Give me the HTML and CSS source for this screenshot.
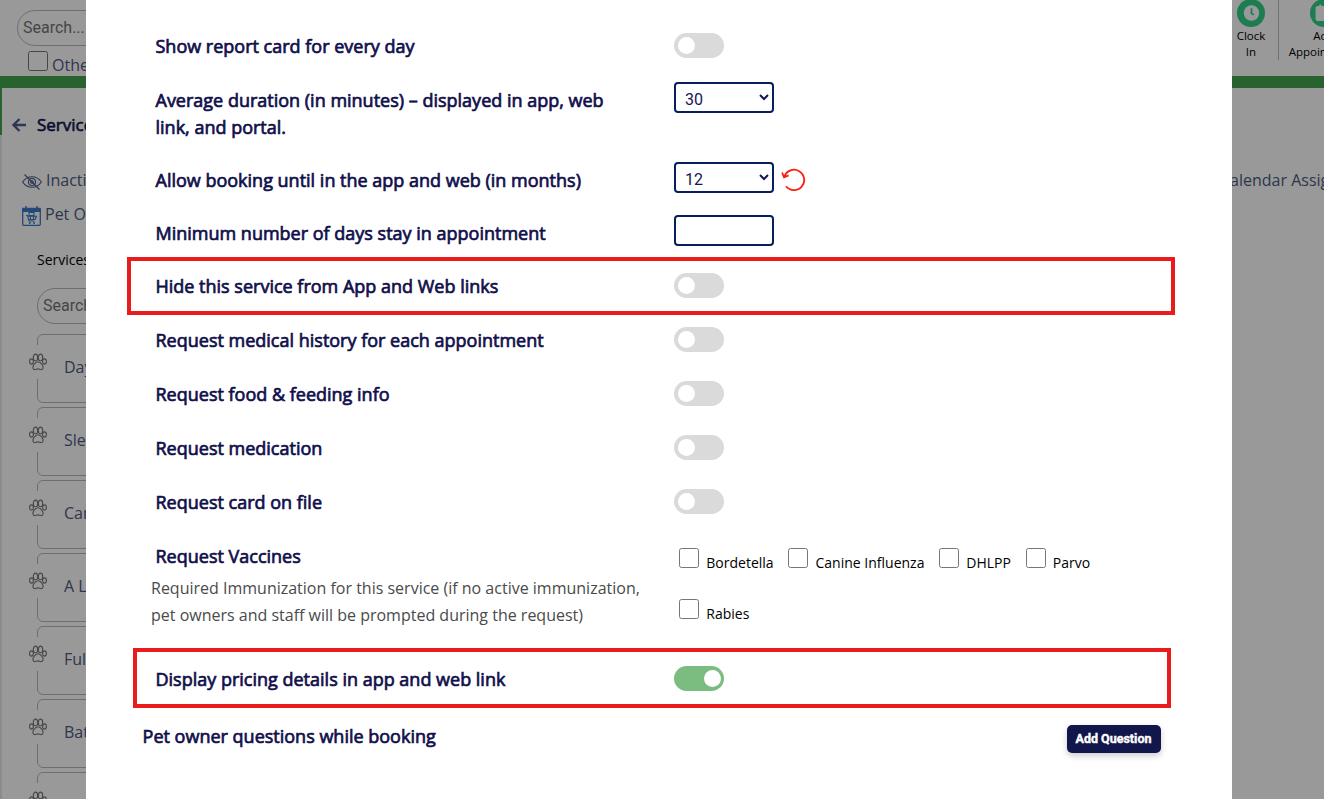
FILE: index.html
```
<!DOCTYPE html>
<html lang="en">
<head>
    <meta charset="UTF-8">
    <title>Service Settings</title>
    <link rel="stylesheet" href="styles.css">
</head>

<body>
<svg class="defs">
    <symbol id="paw" viewBox="0 0 18 34">
        <g transform="translate(0 8.500)">
            <ellipse cx="6.500" cy="3.900" rx="2.200" ry="3.300"/>
            <ellipse cx="11.500" cy="3.900" rx="2.200" ry="3.300"/>
            <ellipse cx="2.500" cy="8" rx="1.900" ry="2.600"/>
            <ellipse cx="15.500" cy="8" rx="1.900" ry="2.600"/>
            <path d="M9 8.200c2.600 0 3.400 1.900 4.400 3.400 1.300 2 .7 4.600-1.200 4.600-1.200 0-1.900-.8-3.200-.8s-2 .8-3.200.8c-1.900 0-2.500-2.600-1.200-4.600 1-1.500 1.800-3.400 4.400-3.400z"/>
        </g>
    </symbol>
</svg>

<div id="page">
    <div id="header">
        <div class="header-search">
            <div class="search">Search...</div>
            <label class="other"><input type="checkbox"> Other</label>
        </div>
        <div class="actions">
            <div class="action">
                <svg width="30" height="30" viewBox="0 0 30 30">
                    <circle cx="15" cy="15" r="15" fill="#2fd085"/>
                    <circle cx="15.500" cy="15" r="8.300" fill="#fff"/>
                    <path d="M15.500 10v5.500l2.500 1.300" fill="none" stroke="#2fd085" stroke-width="1.800"/>
                </svg>
                <span>Clock<br>In</span>
            </div>
            <div class="action">
                <svg width="30" height="30" viewBox="0 0 30 30">
                    <circle cx="15" cy="15" r="15" fill="#2fd085"/>
                    <path d="M8 7.500h2V6h2v1.500h6V6h2v1.500h2a2 2 0 0 1 2 2v12a2 2 0 0 1-2 2H8a2 2 0 0 1-2-2v-12a2 2 0 0 1 2-2z" fill="#fff"/>
                </svg>
                <span>Add<br>Appointment</span>
            </div>
        </div>
    </div>

    <div id="content">
        <div id="sidebar">
            <div class="back">
                <svg width="14" height="14" viewBox="0 0 14 14">
                    <path d="M14 7H2M7.500 1L1.500 7l6 6" fill="none" stroke="#4e5b86" stroke-width="2.300"/>
                </svg>
                <span>Services</span>
            </div>
            <div class="side-link inactive">
                <svg width="20" height="16" viewBox="0 0 20 16">
                    <g fill="none" stroke="#4e5b86" stroke-width="1.100">
                        <path d="M.6 8C3 4.500 6 2.700 10 2.700S17 4.500 19.400 8C17 11.500 14 13.300 10 13.300S3 11.500.6 8z"/>
                        <circle cx="10" cy="8" r="3.500"/>
                        <circle cx="10" cy="8" r="1.300"/>
                        <path d="M2.500.5l15 15"/>
                    </g>
                </svg>
                <span>Inactive</span>
            </div>
            <div class="side-link pet-owner">
                <svg width="19" height="20" viewBox="0 0 19 20">
                    <rect x=".7" y="2.700" width="17.600" height="16.600" rx="1" fill="none" stroke="#3d78c8" stroke-width="1.300"/>
                    <path d="M1 2.500h17v2.700H1zM4 0v3M15 0v3" fill="#3d78c8" stroke="#3d78c8" stroke-width="1.400"/>
                    <path d="M7 6.500h5v3H7zM4 9.500h1.500l1.500 5.500h5.500M5.500 10.300h9l-1.300 3.200H6.500M8.500 10v3.500M11.500 10v3.500" fill="none" stroke="#3d78c8" stroke-width="1.100"/>
                    <circle cx="7.800" cy="17" r="1" fill="#3d78c8"/>
                    <circle cx="12" cy="17" r="1" fill="#3d78c8"/>
                </svg>
                <span>Pet Owner</span>
            </div>
            <div class="side-title">Services</div>
            <div class="search side-search">Search...</div>
            <div class="services">
                <div class="service"><svg class="paw"><use href="#paw"/></svg>Daycare</div>
                <div class="service"><svg class="paw"><use href="#paw"/></svg>Sleepover</div>
                <div class="service"><svg class="paw"><use href="#paw"/></svg>Canine</div>
                <div class="service"><svg class="paw"><use href="#paw"/></svg>A La Carte</div>
                <div class="service"><svg class="paw"><use href="#paw"/></svg>Full Groom</div>
                <div class="service"><svg class="paw"><use href="#paw"/></svg>Bath</div>
                <div class="service"><svg class="paw"><use href="#paw"/></svg></div>
            </div>
        </div>
        <div class="tab">Calendar Assignment</div>
    </div>
</div>

<div id="backdrop">
    <div id="modal">
        <div class="row">
            <div class="name">Show report card for every day</div>
            <div class="toggle"></div>
        </div>
        <div class="row duration">
            <div class="name">Average duration (in minutes) – displayed in app, web link, and portal.</div>
            <div class="field"><select><option>30</option></select></div>
        </div>
        <div class="row short">
            <div class="name">Allow booking until in the app and web (in months)</div>
            <div class="field">
                <select><option>12</option></select>
                <svg class="reset" width="25" height="24" viewBox="0 0 25 24">
                    <path d="M3.400 8.500A10.200 10.200 0 1 1 5 18.300M1.100 4.500l1.900 4.800L7.600 7.300" fill="none" stroke="#fb1d0e" stroke-width="1.800"/>
                </svg>
            </div>
        </div>
        <div class="row short">
            <div class="name">Minimum number of days stay in appointment</div>
            <div class="field"><input type="text"></div>
        </div>
        <div class="row">
            <div class="name">Hide this service from App and Web links</div>
            <div class="toggle"></div>
            <div class="mark mark-hide"></div>
        </div>
        <div class="row">
            <div class="name">Request medical history for each appointment</div>
            <div class="toggle"></div>
        </div>
        <div class="row">
            <div class="name">Request food &amp; feeding info</div>
            <div class="toggle"></div>
        </div>
        <div class="row">
            <div class="name">Request medication</div>
            <div class="toggle"></div>
        </div>
        <div class="row">
            <div class="name">Request card on file</div>
            <div class="toggle"></div>
        </div>
        <div class="row vaccines">
            <div>
                <div class="name">Request Vaccines</div>
                <div class="hint">Required Immunization for this service (if no active immunization, pet owners and staff will be prompted during the request)</div>
            </div>
            <div class="checks">
                <label><input type="checkbox"><span>Bordetella</span></label>
                <label><input type="checkbox"><span>Canine Influenza</span></label>
                <label><input type="checkbox"><span>DHLPP</span></label>
                <label><input type="checkbox"><span>Parvo</span></label>
                <label><input type="checkbox"><span>Rabies</span></label>
            </div>
        </div>
        <div class="row">
            <div class="name">Display pricing details in app and web link</div>
            <div class="toggle on"></div>
            <div class="mark mark-pricing"></div>
        </div>
        <div class="questions">
            <div class="name">Pet owner questions while booking</div>
            <button type="button">Add Question</button>
        </div>
    </div>
</div>
</body>
</html>
```
FILE: styles.css
```
* {
    box-sizing: border-box;
}

body {
    margin: 0;
    height: 799px;
    overflow: hidden;
    color: #000;
    font-family: "Open Sans", Arial, sans-serif;
    font-size: 16px;
}

.defs {
    display: none;
}

#page {
    height: 799px;
    overflow: hidden;
}

#header {
    display: flex;
    justify-content: space-between;
    height: 88px;
    border-bottom: 12px solid #43a34d;
}

.header-search {
    padding: 10px 0 0 17px;
}

.search {
    width: 220px;
    height: 36px;
    padding: 0 5px;
    border: 1px solid #b4b7c0;
    border-radius: 18px;
    color: #757575;
    font-family: Roboto, Arial, sans-serif;
    line-height: 33px;
}

.other {
    display: flex;
    gap: 4px;
    padding: 5px 0 0 11px;
    color: #4e5b7f;
    line-height: 28px;
}

input[type="checkbox"] {
    flex: none;
    width: 20px;
    height: 20px;
    margin: 0;
    border: 1px solid #767676;
    border-radius: 2.5px;
    background: #fff;
    appearance: none;
}

.actions {
    display: flex;
    height: 60px;
    margin-right: -45px;
}

.action {
    display: flex;
    flex-direction: column;
    align-items: center;
    width: 90px;
    margin-top: -1px;
    font-size: 11.5px;
    line-height: 16px;
    text-align: center;
}

.action span {
    margin-top: 1px;
}

.action:first-child {
    width: 56px;
    border-right: 1px solid #bbb;
}

.action:first-child span {
    margin-left: 1px;
}

.action:last-child svg {
    margin-left: -1px;
}

#content {
    display: flex;
}

#sidebar {
    flex: none;
    width: 1220px;
    height: 711px;
    border-left: 2px solid;
    border-image: linear-gradient(#43a34d 48px, #e6e6f0 48px) 1;
    border-width: 0 0 0 2px;
}

.back {
    display: flex;
    align-items: center;
    gap: 11px;
    height: 24px;
    margin: 25px 0 0 10px;
    color: #14174f;
    font-size: 17px;
    -webkit-text-stroke: 0.6px;
}

.back span {
    margin-top: -2px;
}

.side-link {
    display: flex;
    align-items: center;
    gap: 4px;
    height: 24px;
    color: #4e5b7f;
}

.inactive {
    margin: 31px 0 0 20px;
}

.inactive svg {
    margin-top: 3px;
}

.pet-owner {
    margin: 10px 0 0 20px;
}

.pet-owner svg {
    margin-top: 3px;
}

.side-title {
    margin: 23px 0 0 35px;
    font-size: 14px;
    line-height: 22px;
}

.side-search {
    margin: 17px 0 0 35px;
}

.services {
    margin: 10px 0 0 35px;
}

.service {
    width: 220px;
    height: 69px;
    margin-bottom: 4px;
    padding-left: 26px;
    border: 1px solid #b4b7c4;
    border-radius: 6px;
    color: #4e5b86;
    line-height: 64px;
    position: relative;
}

/* sits on the left border of the card and hides a part of it */
.paw {
    position: absolute;
    left: -9px;
    top: 10px;
    width: 18px;
    height: 34px;
    background: #fff;
    fill: none;
    stroke: #777;
    stroke-width: 1.1px;
}

.tab {
    margin-top: 81px;
    color: #4e5b7f;
    line-height: 22px;
    white-space: nowrap;
}

#backdrop {
    position: fixed;
    inset: 0;
    background: rgba(0, 0, 0, .4);
}

#modal {
    width: 1146px;
    height: 799px;
    margin-left: 86px;
    padding-top: 20px;
    background: #fff;
}

.row {
    display: grid;
    grid-template-columns: 518.5px 1fr;
    height: 54px;
    padding: 13px 60px 0 69.5px;
    position: relative;
}

.row.short {
    height: 53px;
}

.row.duration {
    height: 80px;
}

.row.vaccines {
    height: 123px;
}

.name {
    color: #100f4b;
    font-size: 18px;
    line-height: 27px;
    -webkit-text-stroke: 0.7px;
}

.row .name {
    padding-right: 55px;
}

.hint {
    margin: 4.5px 20px 0 -4.5px;
    color: #4a4a4a;
    line-height: 27px;
}

.toggle {
    width: 50px;
    height: 25px;
    padding: 4px 3px 4px 4px;
    border-radius: 13px;
    background: #dadada;
}

.toggle::before {
    content: "";
    display: block;
    width: 17px;
    height: 17px;
    border-radius: 50%;
    background: #fff;
}

.toggle.on {
    background: #7bbc80;
}

.toggle.on::before {
    margin-left: auto;
}

.field {
    display: flex;
    gap: 7px;
    margin-top: -5px;
}

.field select,
.field input {
    width: 100px;
    height: 31px;
    padding: 3px 0 0 5px;
    border: 2px solid #05205c;
    border-radius: 4px;
    color: #14174f;
    background: #fff;
    font-family: Roboto, Arial, sans-serif;
    font-size: 16px;
}

.reset {
    margin-top: 6px;
}

.checks {
    display: flex;
    flex-wrap: wrap;
    gap: 31px 14.6px;
    align-content: flex-start;
    padding: 5px 0 0 5px;
}

.checks label {
    display: flex;
    gap: 7.3px;
    height: 20px;
    font-size: 14px;
    line-height: 29px;
}

/* red frames round the two highlighted settings */
.mark {
    position: absolute;
    border: 4px solid #e81c1c;
}

.mark-hide {
    left: 41px;
    top: -3px;
    width: 1048px;
    height: 58px;
}

.mark-pricing {
    left: 47px;
    top: -5px;
    width: 1038px;
    height: 60px;
}

.questions {
    display: flex;
    justify-content: space-between;
    padding: 16px 71px 0 56.6px;
}

.questions button {
    width: 94px;
    height: 28px;
    margin-top: 2px;
    padding: 0 1px 1px 0;
    border: 0;
    border-radius: 5px;
    color: #fff;
    background: #11164b;
    box-shadow: 0 3px 6px rgba(0, 0, 0, .2);
    font: bold 12.5px Roboto, Arial, sans-serif;
    -webkit-text-stroke: 0.4px;
}
```
